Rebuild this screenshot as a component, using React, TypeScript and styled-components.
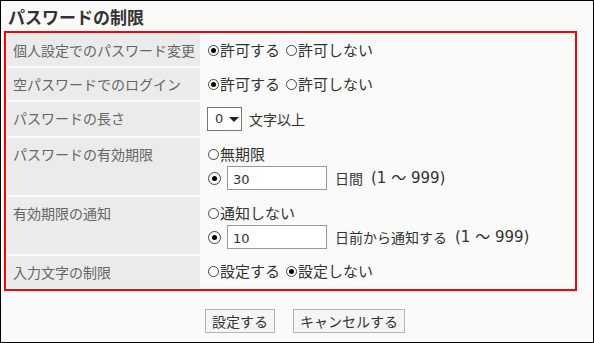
import styled, { createGlobalStyle } from 'styled-components';

const GlobalStyle = createGlobalStyle`
  body {
    margin: 0;
    background: #fafafa;
    font-family: "Noto Sans CJK JP", "Liberation Sans", sans-serif;
  }
`;

const Page = styled.div`
  box-sizing: border-box;
  width: 594px;
  height: 343px;
  border: 1px solid #000;
  background: #fafafa;
  color: #333;
  font-size: 14px;
`;

const Title = styled.h2`
  margin: 0;
  padding: 5px 0 0 7px;
  height: 25px;
  font-size: 17px;
  line-height: 22px;
  font-weight: bold;
  color: #333;
`;

const Frame = styled.div`
  box-sizing: border-box;
  width: 573px;
  margin-left: 3px;
  border: 2px solid #f00;
  padding: 1px 0 1px 1px;
  display: grid;
  grid-template-columns: 193px 1fr;
  gap: 2px;
`;

const Label = styled.div`
  background: #ebebeb;
  color: #666;
  padding: 5px 6px;
  line-height: 22px;
  white-space: nowrap;
`;

const Value = styled.div<{ $pad?: number }>`
  padding: ${({ $pad }) => $pad ?? 5}px 5px;
  line-height: 22px;
  display: flex;
  flex-direction: column;
  gap: 1px;
`;

const Line = styled.div`
  display: flex;
  align-items: center;
  white-space: nowrap;
`;

const Dot = styled.span<{ $on?: boolean; $size?: number }>`
  box-sizing: border-box;
  display: inline-block;
  width: ${({ $size }) => $size ?? 11}px;
  height: ${({ $size }) => $size ?? 11}px;
  border: 1px solid #444;
  border-radius: 50%;
  background: #fff;
  position: relative;
  margin: 0 1px 0 1px;
  flex-shrink: 0;
  &::after {
    content: '';
    display: ${({ $on }) => ($on ? 'block' : 'none')};
    position: absolute;
    left: 50%;
    top: 50%;
    width: 5px;
    height: 5px;
    margin: -2.5px 0 0 -2.5px;
    border-radius: 50%;
    background: #000;
  }
`;

const Choice = styled.span`
  display: inline-flex;
  align-items: center;
  margin-right: 5px;
  font-size: 15px;
`;

const Select = styled.span`
  box-sizing: border-box;
  display: inline-flex;
  align-items: center;
  gap: 6px;
  width: 35px;
  height: 24px;
  padding-left: 7px;
  border: 1px solid #777;
  background: #fff;
  margin-right: 7px;
  font-family: "DejaVu Sans", sans-serif;
  font-size: 13px;
`;

const Arrow = styled.span`
  width: 0;
  height: 0;
  border-left: 5px solid transparent;
  border-right: 5px solid transparent;
  border-top: 5px solid #222;
`;

const Field = styled.span`
  box-sizing: border-box;
  display: inline-block;
  width: 100px;
  height: 24px;
  margin: 0 8px 0 5px;
  padding: 4px 0 0 5px;
  border: 1px solid #999;
  background: #fff;
  font-family: "DejaVu Sans", sans-serif;
  font-size: 13px;
  line-height: 18px;
`;

const Range = styled.span`
  margin-left: 8px;
  font-family: "DejaVu Sans", "Noto Sans CJK JP", sans-serif;
  font-size: 15px;
`;

const Buttons = styled.div`
  display: flex;
  justify-content: center;
  gap: 18px;
  padding-left: 16px;
  margin-top: 18px;
`;

const Button = styled.button`
  box-sizing: border-box;
  height: 24px;
  padding: 0 6px;
  border: 1px solid #b5b5b5;
  background: #f5f5f5;
  color: #333;
  font-family: inherit;
  font-size: 14px;
  line-height: 20px;
`;

type Opt = { text: string; on?: boolean };

const Radios = ({ opts }: { opts: Opt[] }) => (
  <Line>
    {opts.map((o) => (
      <Choice key={o.text}>
        <Dot $on={o.on} />
        {o.text}
      </Choice>
    ))}
  </Line>
);

export default function App() {
  return (
    <>
      <GlobalStyle />
      <Page>
        <Title>パスワードの制限</Title>
        <Frame>
          <Label>個人設定でのパスワード変更</Label>
          <Value>
            <Radios opts={[{ text: '許可する', on: true }, { text: '許可しない' }]} />
          </Value>

          <Label>空パスワードでのログイン</Label>
          <Value>
            <Radios opts={[{ text: '許可する', on: true }, { text: '許可しない' }]} />
          </Value>

          <Label>パスワードの長さ</Label>
          <Value>
            <Line>
              <Select>
                0<Arrow />
              </Select>
              文字以上
            </Line>
          </Value>

          <Label>パスワードの有効期限</Label>
          <Value>
            <Radios opts={[{ text: '無期限' }]} />
            <Line>
              <Dot $on $size={13} />
              <Field>30</Field>
              日間<Range>(1 ～ 999)</Range>
            </Line>
          </Value>

          <Label>有効期限の通知</Label>
          <Value>
            <Radios opts={[{ text: '通知しない' }]} />
            <Line>
              <Dot $on $size={13} />
              <Field>10</Field>
              日前から通知する<Range>(1 ～ 999)</Range>
            </Line>
          </Value>

          <Label>入力文字の制限</Label>
          <Value $pad={4}>
            <Radios opts={[{ text: '設定する' }, { text: '設定しない', on: true }]} />
          </Value>
        </Frame>
        <Buttons>
          <Button>設定する</Button>
          <Button>キャンセルする</Button>
        </Buttons>
      </Page>
    </>
  );
}
